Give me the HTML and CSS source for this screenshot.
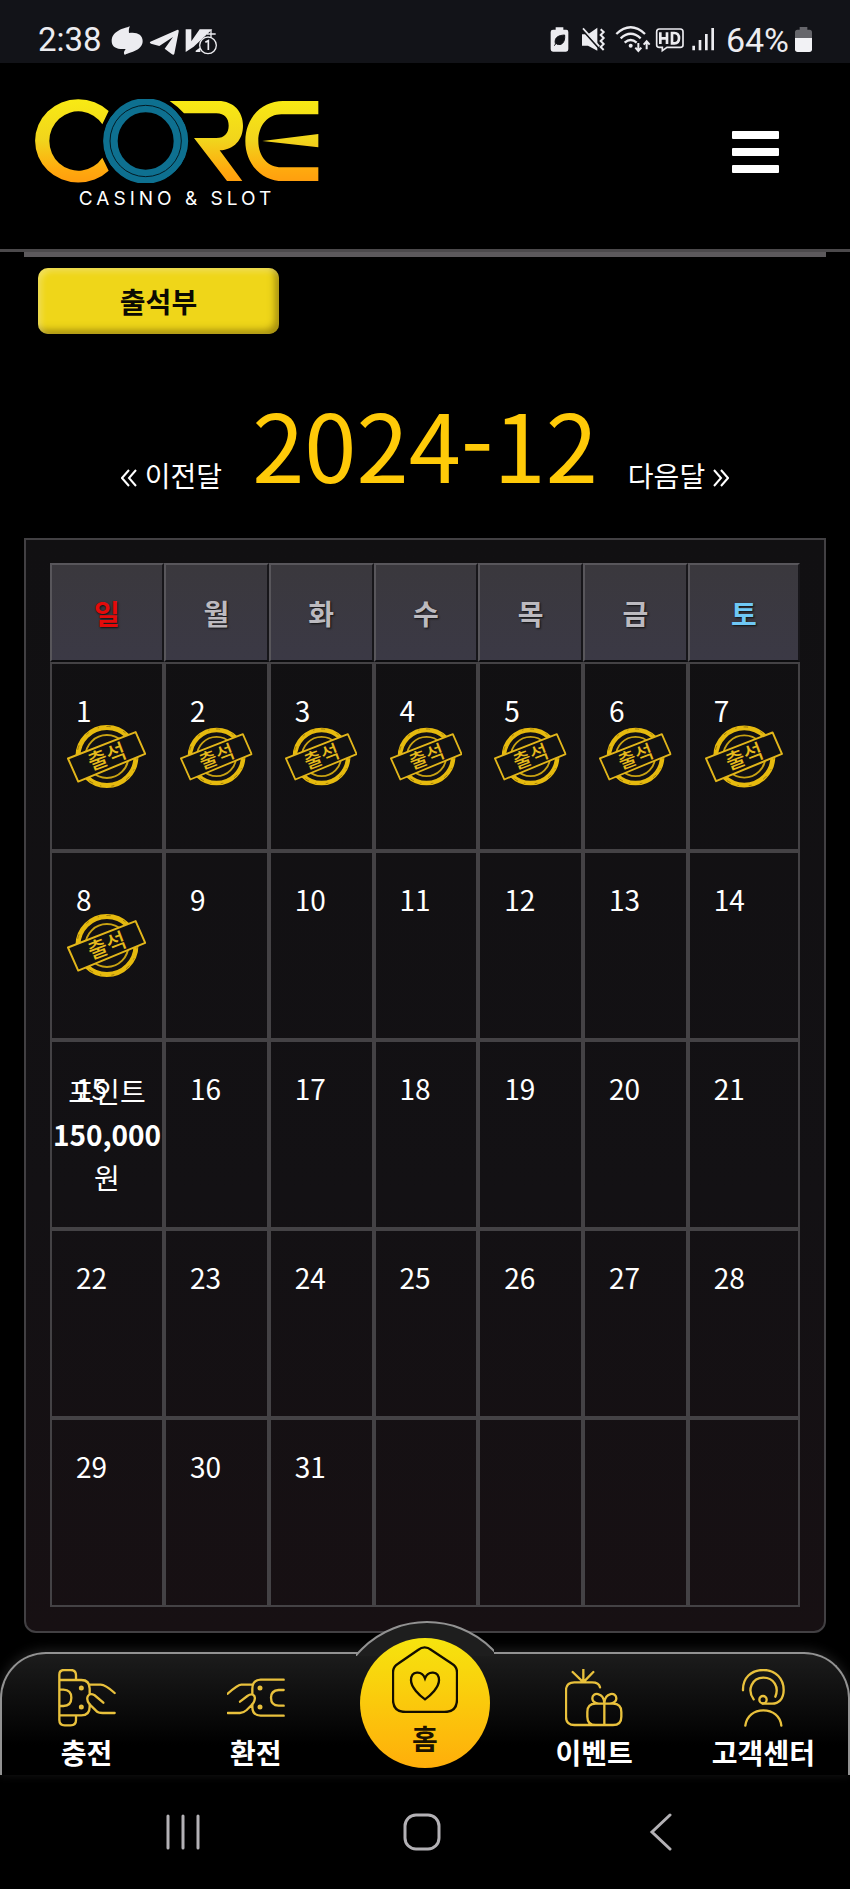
FILE: index.html
```
<!DOCTYPE html>
<html lang="ko">
<head>
  <meta charset="utf-8">
  <meta name="viewport" content="width=device-width, initial-scale=1">
  <title>출석부</title>
  <link rel="stylesheet" href="styles.css">
</head>
<body>
  <svg class="defs" width="0" height="0" aria-hidden="true">
    <defs>
      <linearGradient id="gold" x1="0" y1="303" x2="0" y2="553" gradientUnits="userSpaceOnUse">
        <stop offset="0" stop-color="#f8ea14"/>
        <stop offset="0.5" stop-color="#f1d41c"/>
        <stop offset="0.85" stop-color="#ffa90e"/>
        <stop offset="1" stop-color="#ff9d0e"/>
      </linearGradient>
      <symbol id="stamp" viewBox="20 45 240 194">
        <circle cx="141" cy="142" r="88" fill="none" stroke="#e6ba0e" stroke-width="15"/>
        <circle cx="141" cy="142" r="91" fill="none" stroke="#9a780c" stroke-width="3" stroke-dasharray="9 31 4 22 14 40"/>
        <circle cx="141" cy="142" r="65" fill="none" stroke="#c9a212" stroke-width="6"/>
        <path d="M23 148 L228 68 L257 134 L54 218 Z" fill="#111112" stroke="#e2b61a" stroke-width="6" stroke-linejoin="round"/>
        <text class="stamp-text" x="142" y="165" text-anchor="middle" transform="rotate(-21 142 144)">출석</text>
      </symbol>
    </defs>
  </svg>

  <div class="status">
    <span class="clock">2:38</span>
    <svg class="status-left" width="106" height="30" viewBox="0 0 318 90" fill="#ececf0">
      <path d="M57 4 C50 8 2 14 2 48 C2 68 20 74 44 72 C40 78 36 84 42 90 C48 82 95 80 95 48 C95 28 76 20 54 24 C53 16 54 8 57 4Z"/>
      <path d="M118 50 L198 15 Q204 13 203 20 L190 86 Q188 92 182 87 L161 71 L186 36 L145 63 L120 56 Q114 53 118 50Z"/>
      <path d="M224 13 H241 V49 L266 13 H304 L248 65 L224 81Z"/>
      <path d="M300 15 V37 M288 27 H314" stroke="#ececf0" stroke-width="4"/>
      <path d="M254 77 l14 -10 v14 h-14z"/>
      <circle cx="291" cy="61" r="25" fill="#121318" stroke="#ececf0" stroke-width="4"/>
      <path d="M283 52 L292 47 V75" fill="none" stroke="#ececf0" stroke-width="5"/>
    </svg>
    <svg class="status-right" width="166" height="30" viewBox="365 75 498 90" fill="none" stroke="#ececf0" stroke-width="5">
      <path d="M385 82 H408 V89 H417 Q423 89 423 96 V148 Q423 155 416 155 H377 Q370 155 370 148 V96 Q370 89 377 89 H385Z" fill="#ececf0" stroke="none"/>
      <path d="M384 131 C380 110 396 106 412 105 C414 128 402 138 388 132 M380 137 L401 117" fill="#121318" stroke="#121318" stroke-width="3"/>
      <path d="M464 103 H482 L510 83 V152 L482 137 H464Z" fill="#ececf0" stroke="none"/>
      <path d="M462 86 L524 155" stroke="#121318" stroke-width="6"/>
      <path d="M467 85 L516 139" stroke-width="5"/>
      <path d="M520 88 l9 8 -9 9 9 9 -9 9 9 9 -9 9 9 9" stroke-width="6"/>
      <path d="M567 102 Q610 62 653 102 M580 115 Q610 88 640 115 M592 128 Q610 112 628 128" stroke-width="7"/>
      <circle cx="610" cy="137" r="6" fill="#ececf0" stroke="none"/>
      <path d="M633 129 V152 M624 143 L633 153 L642 143 M658 148 V125 M649 134 L658 124 L667 134" stroke-width="6"/>
      <path d="M696 87 H759 Q767 87 767 95 V135 Q767 142 759 142 H719 L705 152 V142 H696 Q688 142 688 135 V95 Q688 87 696 87Z" stroke-width="5"/>
      <path d="M699 97 V132 M719 97 V132 M699 115 H719 M734 99 V130 H741 Q755 130 755 115 Q755 99 741 99Z" stroke-width="8"/>
      <path d="M799 137 V151 M818 120 V151 M837 102 V151 M856 84 V151" stroke-width="8"/>
    </svg>
    <span class="percent">64%</span>
    <svg width="17" height="25" viewBox="0 0 51 75">
      <path d="M14 0 H37 V8 H44 Q51 8 51 16 V33 H0 V16 Q0 8 7 8 H14Z" fill="#66666b"/>
      <path d="M0 33 H51 V67 Q51 75 43 75 H8 Q0 75 0 67Z" fill="#f2f2f5"/>
    </svg>
  </div>

  <header class="header">
    <a class="logo" href="#" aria-label="CORE CASINO &amp; SLOT">
      <svg width="284" height="84" viewBox="106 302 852 252">
        <path fill="url(#gold)" d="M327 338 A130 125 0 1 0 327 517 L308 478 A87 89 0 1 1 308 378 Z"/>
        <ellipse cx="438" cy="428" rx="105" ry="107" fill="none" stroke="#0e7090" stroke-width="42"/>
        <ellipse cx="438" cy="428" rx="123" ry="121" fill="none" stroke="#0e7090" stroke-width="9"/>
        <ellipse cx="438" cy="428" rx="107" ry="107" fill="none" stroke="#031b24" stroke-width="3"/>
        <path fill="url(#gold)" d="M510 308 H656 C702 308 730 340 730 382 C730 424 703 454 660 456 L728 548 H682 L583 419 H650 C675 419 687 403 687 382 C687 360 675 345 650 345 H553 Q534 324 510 308Z"/>
        <path fill="url(#gold)" d="M956 308 H850 C785 308 737 360 737 428 C737 496 785 548 850 548 H956 V507 H845 C805 507 776 475 776 428 C776 381 805 348 845 348 H956Z M788 428 L956 407 V447Z"/>
      </svg>
      <span>CASINO &amp; SLOT</span>
    </a>
    <button class="menu" type="button" aria-label="메뉴"><i></i><i></i><i></i></button>
  </header>

  <main class="main">
    <div class="title-bar">
      <button class="tab" type="button">출석부</button>
    </div>

    <div class="month">
      <a href="#"><svg width="16" height="18" viewBox="0 0 16 18"><path d="M8 1 L1 9 L8 17 M15 1 L8 9 L15 17"/></svg>이전달</a>
      <h1>2024-12</h1>
      <a href="#">다음달<svg width="16" height="18" viewBox="0 0 16 18"><path d="M1 1 L8 9 L1 17 M8 1 L15 9 L8 17"/></svg></a>
    </div>

    <div class="panel">
      <table class="calendar">
        <thead>
          <tr>
            <th class="sun">일</th>
            <th>월</th>
            <th>화</th>
            <th>수</th>
            <th>목</th>
            <th>금</th>
            <th class="sat">토</th>
          </tr>
        </thead>
        <tbody>
          <tr>
            <td><span class="day">1</span><svg class="stamp"><use href="#stamp"/></svg></td>
            <td><span class="day">2</span><svg class="stamp"><use href="#stamp"/></svg></td>
            <td><span class="day">3</span><svg class="stamp"><use href="#stamp"/></svg></td>
            <td><span class="day">4</span><svg class="stamp"><use href="#stamp"/></svg></td>
            <td><span class="day">5</span><svg class="stamp"><use href="#stamp"/></svg></td>
            <td><span class="day">6</span><svg class="stamp"><use href="#stamp"/></svg></td>
            <td><span class="day">7</span><svg class="stamp"><use href="#stamp"/></svg></td>
          </tr>
          <tr>
            <td><span class="day">8</span><svg class="stamp"><use href="#stamp"/></svg></td>
            <td><span class="day">9</span></td>
            <td><span class="day">10</span></td>
            <td><span class="day">11</span></td>
            <td><span class="day">12</span></td>
            <td><span class="day">13</span></td>
            <td><span class="day">14</span></td>
          </tr>
          <tr>
            <td><span class="day">15</span>포인트<br><b>150,000</b><br>원</td>
            <td><span class="day">16</span></td>
            <td><span class="day">17</span></td>
            <td><span class="day">18</span></td>
            <td><span class="day">19</span></td>
            <td><span class="day">20</span></td>
            <td><span class="day">21</span></td>
          </tr>
          <tr>
            <td><span class="day">22</span></td>
            <td><span class="day">23</span></td>
            <td><span class="day">24</span></td>
            <td><span class="day">25</span></td>
            <td><span class="day">26</span></td>
            <td><span class="day">27</span></td>
            <td><span class="day">28</span></td>
          </tr>
          <tr>
            <td><span class="day">29</span></td>
            <td><span class="day">30</span></td>
            <td><span class="day">31</span></td>
            <td></td>
            <td></td>
            <td></td>
            <td></td>
          </tr>
        </tbody>
      </table>
    </div>
  </main>

  <nav class="tabs">
    <div class="dome"></div>
    <a href="#">
      <svg width="58" height="58" viewBox="170 237 174 174">
        <path d="M174 268 V254 Q174 240 188 240 H208 Q224 240 224 256 V268 M174 378 V390 Q174 406 190 406 H208 Q224 406 224 390 V378 M174 268 V378 M174 270 H240 Q265 270 265 296 V312 M174 376 H240 Q265 376 265 350 V342 M174 299 H186 Q210 300 210 323 Q210 347 186 348 H174 M265 284 H298 Q312 284 340 309 M306 338 L280 316 Q266 308 260 318 Q254 328 264 342 L284 362 Q290 369 304 369 H340"/>
        <circle cx="240" cy="294" r="4"/><circle cx="240" cy="351" r="4"/>
      </svg>
      <span>충전</span>
    </a>
    <a href="#">
      <svg width="58" height="58" viewBox="679 237 174 174">
        <path d="M849 269 H780 Q755 270 755 296 V312 M849 377 H780 Q755 376 755 350 V342 M849 300 H834 Q811 302 811 323 Q811 346 834 347 H849 M755 284 H722 Q712 284 681 311 M718 335 L740 318 Q754 308 761 318 Q766 328 756 342 L738 360 Q728 369 718 369 H681"/>
        <circle cx="778" cy="294" r="4"/><circle cx="778" cy="351" r="4"/>
      </svg>
      <span>환전</span>
    </a>
    <a class="home" href="#">
      <svg width="66" height="67" viewBox="0 0 198 201">
        <path d="M3 79 Q3 62 18 53 L78 12 Q98 -4 118 12 L180 53 Q195 62 195 79 V160 Q195 198 157 198 H41 Q3 198 3 160Z M99 160 C82 148 57 124 57 103 C57 73 90 73 99 97 C108 73 141 73 141 103 C141 124 116 148 99 160Z"/>
      </svg>
      <span>홈</span>
    </a>
    <a href="#">
      <svg width="58" height="58" viewBox="424 237 174 174">
        <path d="M479 238 V275 M447 246 L477 275 M509 246 L481 275 M529 292 Q526 277 505 277 H452 Q427 277 427 302 V381 Q427 405 452 405 H510 M516 341 H568 Q593 341 593 366 V380 Q593 405 568 405 H516 Q491 405 491 380 V366 Q491 341 516 341Z M542 341 V405 M542 341 C530 341 506 343 506 325 C506 305 540 306 542 339 C544 306 578 305 578 325 C578 343 554 341 542 341"/>
      </svg>
      <span>이벤트</span>
    </a>
    <a href="#">
      <svg width="58" height="58" viewBox="932 237 174 174">
        <path d="M959 301 C958 264 983 240 1020 240 C1057 240 1081 266 1081 300 C1081 328 1065 341 1046 341 H1018 M991 328 C970 300 986 263 1020 263 C1052 263 1068 292 1056 320 M966 407 C970 378 992 361 1020 361 C1048 361 1071 378 1074 407"/>
        <circle cx="1019" cy="329" r="11"/>
      </svg>
      <span>고객센터</span>
    </a>
  </nav>

  <div class="system">
    <button type="button" aria-label="최근 앱"><svg width="38" height="38" viewBox="0 0 38 38"><path d="M4 3 V35 M19 3 V35 M34 3 V35"/></svg></button>
    <button type="button" aria-label="홈 화면"><svg width="38" height="38" viewBox="0 0 38 38"><rect x="2" y="2" width="34" height="34" rx="11"/></svg></button>
    <button type="button" aria-label="뒤로"><svg width="38" height="38" viewBox="0 0 38 38"><path d="M28 2 L10 19 L28 36"/></svg></button>
  </div>
</body>
</html>
```
FILE: styles.css
```
* { box-sizing: border-box; }
body {
  margin: 0;
  background: #000;
  color: #fff;
  font-family: "Noto Sans CJK KR", sans-serif;
  font-size: 28px;
}
a { color: inherit; text-decoration: none; }
button { font: inherit; border: 0; padding: 0; background: none; cursor: pointer; }
.defs { position: absolute; }

/* phone status bar */
.status {
  display: flex;
  align-items: center;
  height: 63px;
  padding: 16px 38px 0 38px;
  background: #121318;
  color: #ececf0;
  font-family: Roboto, sans-serif;
  font-size: 33px;
}
.status-left { margin-left: 9px; }
.status-right { margin-left: auto; }
.percent { margin: 0 6px 0 11px; font-size: 34px; }

.header {
  display: flex;
  justify-content: space-between;
  align-items: center;
  height: 189px;
  padding: 0 71px 0 35px;
  border-bottom: 3px solid #4b494b;
}
.logo {
  display: flex;
  flex-direction: column;
  align-items: center;
  padding-top: 2px;
  font-family: Inter, sans-serif;
  font-size: 19px;
  line-height: 32px;
  letter-spacing: 4px;
}
.menu { display: grid; gap: 9px; width: 47px; margin-bottom: 8px; }
.menu i { height: 8px; border-radius: 1px; background: #fff; }

.main { padding: 0 24px; }
.title-bar {
  padding: 11px 14px 0;
  border-top: 5px solid #5c595c;
}
.tab {
  width: 241px;
  height: 66px;
  border-radius: 10px;
  background: #efd619;
  box-shadow: inset 3px 3px 6px rgba(255, 255, 255, .3), inset -4px -4px 7px rgba(90, 70, 0, .5);
  color: #0c0a02;
  font-weight: bold;
}

.month {
  display: flex;
  justify-content: center;
  align-items: flex-end;
  gap: 30px;
  height: 204px;
  padding-bottom: 46px;
  line-height: 34px;
}
.month h1 {
  margin: 0;
  color: #ffca08;
  font-size: 94px;
  font-weight: normal;
  line-height: 100px;
}
.month svg { margin: 0 8px; fill: none; stroke: #fff; stroke-width: 2; }
.month a:first-child svg { margin-left: 0; }
.month a:last-child svg { margin-right: 0; }

.panel {
  padding: 23px 24px 24px;
  border: 2px solid #424043;
  border-radius: 0 0 12px 12px;
  background: linear-gradient(#111012, #131114 60%, #171013);
}
.calendar {
  width: 100%;
  table-layout: fixed;
  border-collapse: separate;
  border-spacing: 0;
}
.calendar th {
  width: 14%;
  height: 99px;
  padding: 0;
  border: 2px solid;
  border-color: #58565b #17161a #0c0c0e #58565b;
  background: linear-gradient(#3a383d, #3b3945);
  color: #bcbabf;
  text-shadow: 1px 1px 2px #111;
}
.calendar th:first-child { width: 114px; }
.calendar th:last-child { width: 15%; }
.calendar .sun { color: #e30b0b; }
.calendar .sat { color: #6fc8f5; }
.calendar td {
  position: relative;
  height: 189px;
  padding: 0;
  border: 2px solid #444245;
  text-align: center;
  line-height: 43px;
}
.day {
  position: absolute;
  top: 25px;
  left: 24px;
}
.stamp {
  display: block;
  width: 72%;
  height: 65px;
  margin: 0 auto;
}
.stamp-text { fill: #e6ba1c; font-size: 64px; font-weight: 500; }

.tabs {
  position: relative;
  display: grid;
  grid-template-columns: repeat(5, 1fr);
  height: 123px;
  margin-top: 19px;
  border: 2px solid #929292;
  border-bottom: 0;
  border-radius: 46px 46px 0 0;
  background: linear-gradient(#1c1c1c, #000 75%);
  box-shadow: 0 -2px 12px rgba(255, 255, 255, .12);
  font-weight: bold;
}
.tabs a {
  display: flex;
  flex-direction: column;
  align-items: center;
  padding-top: 15px;
  line-height: 50px;
  white-space: nowrap;
}
.tabs svg { fill: none; stroke: #e9c13c; stroke-width: 7; stroke-linecap: round; }
/* raised arc behind the home button */
.dome {
  position: absolute;
  top: -33px;
  left: 50%;
  width: 138px;
  height: 35px;
  margin-left: -69px;
  overflow: hidden;
}
.dome::before {
  content: "";
  display: block;
  width: 182px;
  height: 182px;
  margin-left: -22px;
  border: 2px solid #929292;
  border-radius: 50%;
  background: #1e1e1e;
}
.tabs .home {
  position: relative;
  justify-self: center;
  width: 130px;
  height: 130px;
  margin-top: -16px;
  padding-top: 8px;
  border-radius: 50%;
  background: linear-gradient(#f6e40e, #ffae0a);
  color: #1c1200;
}
.home svg { stroke: #120d00; }

.system {
  display: grid;
  grid-template-columns: repeat(3, 1fr);
  align-items: center;
  height: 114px;
  padding: 0 70px 0 64px;
}
.system svg {
  display: block;
  margin: 0 auto;
  fill: none;
  stroke: #b3b1b5;
  stroke-width: 3;
  stroke-linecap: round;
}
```
